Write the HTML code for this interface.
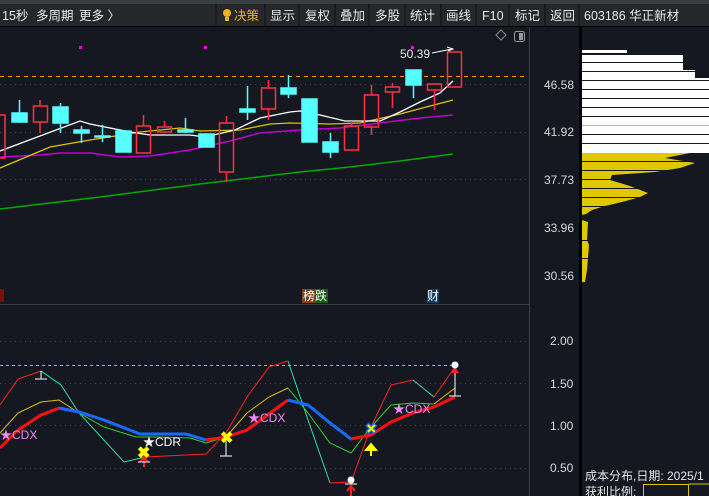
<!DOCTYPE html>
<html><head><meta charset="utf-8"><style>
html,body{margin:0;padding:0;background:#151821;width:709px;height:496px;overflow:hidden;font-family:"Liberation Sans","Noto Sans CJK SC",sans-serif}
svg{display:block}
</style></head><body>
<svg width="709" height="496" xmlns="http://www.w3.org/2000/svg" font-family="Liberation Sans, Noto Sans CJK SC, sans-serif">
<rect width="709" height="496" fill="#151821"/>
<!-- top bar -->
<rect x="0" y="0" width="709" height="4" fill="#3a3d44"/>
<rect x="0" y="4" width="709" height="22" fill="#26272b"/>
<rect x="0" y="26" width="709" height="1" fill="#000"/>
<g font-size="12.5" fill="#e8e8e8">
<text x="2" y="20">15秒</text><text x="36" y="20">多周期</text><text x="79" y="20">更多 〉</text>
</g>
<g stroke="#111" stroke-width="1">
<line x1="216" y1="4" x2="216" y2="26"/><line x1="265" y1="4" x2="265" y2="26"/><line x1="299" y1="4" x2="299" y2="26"/><line x1="335" y1="4" x2="335" y2="26"/><line x1="369" y1="4" x2="369" y2="26"/><line x1="405" y1="4" x2="405" y2="26"/><line x1="441" y1="4" x2="441" y2="26"/><line x1="476" y1="4" x2="476" y2="26"/><line x1="509" y1="4" x2="509" y2="26"/><line x1="545" y1="4" x2="545" y2="26"/><line x1="579" y1="4" x2="579" y2="26"/>
</g>
<circle cx="227" cy="13" r="4" fill="#f0b020"/><rect x="225" y="17" width="4" height="4" fill="#f0b020"/>
<g font-size="12.5" fill="#e8e8e8">
<text x="234" y="20" fill="#f0b020">决策</text><text x="270" y="20">显示</text><text x="305" y="20">复权</text><text x="340" y="20">叠加</text><text x="375" y="20">多股</text><text x="410" y="20">统计</text><text x="446" y="20">画线</text><text x="482" y="20">F10</text><text x="515" y="20">标记</text><text x="550" y="20">返回</text>
<text x="584" y="20">603186 华正新材</text>
</g>
<!-- separators -->
<line x1="529.5" y1="27" x2="529.5" y2="496" stroke="#3a3d44"/>
<rect x="579" y="27" width="3" height="469" fill="#000"/>
<line x1="0" y1="304.5" x2="529" y2="304.5" stroke="#3a3d44"/>
<!-- icons -->
<path d="M501 30 L506 35 L501 40 L496 35 Z" fill="none" stroke="#888"/>
<rect x="514.5" y="31.5" width="10" height="10" rx="2" fill="none" stroke="#999"/><rect x="519" y="33" width="4" height="7" fill="#999"/>
<!-- grid -->
<g stroke="#3c3f48" stroke-dasharray="1,4">
<line x1="0" y1="84.5" x2="529" y2="84.5"/><line x1="0" y1="132.5" x2="529" y2="132.5"/><line x1="0" y1="179.5" x2="529" y2="179.5"/>
<line x1="0" y1="341.5" x2="529" y2="341.5"/><line x1="0" y1="383.5" x2="529" y2="383.5"/><line x1="0" y1="425.5" x2="529" y2="425.5"/><line x1="0" y1="468.5" x2="529" y2="468.5"/>
</g>
<line x1="0" y1="76.5" x2="528" y2="76.5" stroke="#ff9a00" stroke-dasharray="4,4"/>
<!-- axis labels -->
<g font-size="12" fill="#d8d8d8">
<text x="544" y="89">46.58</text><text x="544" y="136">41.92</text><text x="544" y="184">37.73</text><text x="544" y="232">33.96</text><text x="544" y="280">30.56</text>
<text x="550" y="345">2.00</text><text x="550" y="388">1.50</text><text x="550" y="430">1.00</text><text x="550" y="472">0.50</text>
</g>
<!-- magenta dots -->
<rect x="79" y="46" width="3" height="3" fill="#ff00ff"/><rect x="204" y="46" width="3" height="3" fill="#ff00ff"/><rect x="411" y="46" width="3" height="3" fill="#ff00ff"/>
<text x="400" y="58" font-size="12" fill="#e8e8e8">50.39</text>
<path d="M432 53 L452 49 M447 47 L453 49 L448 51" stroke="#fff" fill="none"/>
<!-- MA lines -->
<polyline fill="none" stroke="#0a0" stroke-width="1.5" points="0,209 100,197 200,184 250,178 300,172 350,167 400,161 453,154"/>
<polyline fill="none" stroke="#c000d0" stroke-width="1.5" points="0,157 40,155 60,153 90,153 120,157 150,156 190,150 230,141 260,133 300,130 340,128 380,123 420,118 453,115"/>
<polyline fill="none" stroke="#e0c000" stroke-width="1.3" points="0,168 50,147 90,140 140,132 180,128 200,131 240,130 270,124 290,123 330,124 360,123 400,114 430,106 453,100"/>
<polyline fill="none" stroke="#fff" stroke-width="1.3" points="0,151 80,121 90,124 130,132 150,135 190,135 205,137 235,130 260,118 290,112 300,111 320,115 345,121 360,121 380,121 400,112 420,102 440,93 453,81"/>
<!-- candles -->
<g stroke-width="1.5">
<g stroke="#ff3040" fill="none">
<rect x="-2" y="115" width="7" height="43"/><line x1="40" y1="100" x2="40" y2="106"/><line x1="40" y1="122" x2="40" y2="133"/><rect x="33.5" y="106" width="14" height="16"/>
<line x1="143.5" y1="115" x2="143.5" y2="126"/><rect x="136.5" y="126" width="14" height="27"/>
<line x1="164.5" y1="121" x2="164.5" y2="127"/><rect x="157.5" y="127" width="14" height="5"/>
<line x1="226.5" y1="116" x2="226.5" y2="123"/><line x1="226.5" y1="172" x2="226.5" y2="182"/><rect x="219.5" y="123" width="14" height="49"/>
<line x1="268.5" y1="80" x2="268.5" y2="88"/><line x1="268.5" y1="109" x2="268.5" y2="120"/><rect x="261.5" y="88" width="14" height="21"/>
<rect x="344.5" y="126" width="14" height="24"/><line x1="351.5" y1="121" x2="351.5" y2="126"/>
<line x1="371.5" y1="85" x2="371.5" y2="95"/><line x1="371.5" y1="127" x2="371.5" y2="135"/><rect x="364.5" y="95" width="14" height="32"/>
<line x1="392.5" y1="83" x2="392.5" y2="87"/><line x1="392.5" y1="92" x2="392.5" y2="108"/><rect x="385.5" y="87" width="14" height="5"/>
<line x1="434.5" y1="90" x2="434.5" y2="110"/><rect x="427.5" y="84" width="14" height="6"/>
<rect x="447.5" y="52" width="14" height="35"/>
</g>
<g stroke="#55ffff" fill="#55ffff">
<line x1="19.5" y1="100" x2="19.5" y2="123"/><rect x="12" y="113" width="15" height="9"/>
<line x1="60.5" y1="103" x2="60.5" y2="133"/><rect x="53" y="107" width="15" height="16"/>
<line x1="81.5" y1="126" x2="81.5" y2="143"/><rect x="74" y="130" width="15" height="3"/>
<line x1="102.5" y1="125" x2="102.5" y2="142"/><rect x="95" y="136" width="15" height="1"/>
<rect x="116" y="131" width="15" height="21"/>
<line x1="185.5" y1="118" x2="185.5" y2="133"/><rect x="178" y="130" width="15" height="2"/>
<rect x="199" y="134" width="15" height="13"/>
<line x1="247.5" y1="86" x2="247.5" y2="120"/><rect x="240" y="109" width="15" height="3"/>
<line x1="288.5" y1="75" x2="288.5" y2="98"/><rect x="281" y="88" width="15" height="6"/>
<rect x="302" y="99" width="15" height="43"/>
<line x1="330.5" y1="133" x2="330.5" y2="158"/><rect x="323" y="142" width="15" height="10"/>
<line x1="413.5" y1="85" x2="413.5" y2="98"/><rect x="406" y="70" width="15" height="15"/>
</g>
</g>
<!-- tags -->
<rect x="0" y="289" width="4" height="13" fill="#7a1010"/>
<rect x="302" y="289" width="14" height="14" fill="#7a4010"/><rect x="316" y="289" width="12" height="14" fill="#106010"/>
<text x="303" y="300" font-size="12" fill="#fff">榜跌</text>
<rect x="427" y="289" width="12" height="14" fill="#103a60"/><text x="427" y="300" font-size="12" fill="#fff">财</text>
<!-- bottom indicator -->
<line x1="0" y1="365.5" x2="455" y2="365.5" stroke="#40e0e0" stroke-dasharray="3,3"/>
<polyline fill="none" stroke="#ff2020" points="0,405 18,379 41,371"/>
<polyline fill="none" stroke="#30e0a0" points="41,371 61,385 79,413 124,462 145,457"/>
<polyline fill="none" stroke="#ff2020" points="145,457 206,454 226,433 247,397 269,367 288,361"/>
<polyline fill="none" stroke="#30e0a0" points="288,361 308,420 330,483"/>
<polyline fill="none" stroke="#ff2020" points="330,483 351,482 371,427 391,385 413,380"/>
<polyline fill="none" stroke="#30e0a0" points="413,380 434,397"/>
<polyline fill="none" stroke="#ff2020" points="434,397 455,367"/>
<polyline fill="none" stroke="#30d030" points="79,413 104,427 136,437 158,437 190,438 206,443 226,437"/>
<polyline fill="none" stroke="#30d030" points="288,388 308,413 330,443 351,453 371,427 391,405 413,403 434,404"/>
<polyline fill="none" stroke="#e0c000" points="0,433 18,413 41,402 59,400 79,413"/><polyline fill="none" stroke="#e0c000" points="226,437 247,413 269,397 288,388"/><polyline fill="none" stroke="#e0c000" points="434,404 455,388"/>
<polyline fill="none" stroke="#ff1010" stroke-width="3" points="0,448 18,430 41,415 59,408"/>
<polyline fill="none" stroke="#1a6aff" stroke-width="3" points="59,408 79,412 104,420 140,434 186,434 206,440"/>
<polyline fill="none" stroke="#ff1010" stroke-width="3" points="206,440 226,437 247,430 288,400"/>
<polyline fill="none" stroke="#1a6aff" stroke-width="3" points="288,400 308,405 330,423 351,439"/>
<polyline fill="none" stroke="#ff1010" stroke-width="3" points="351,439 371,435 391,422 413,413 434,407 455,397"/>
<path d="M35 379 H47 M41 379 V371" stroke="#fff" fill="none"/>
<path d="M220 456 H232 M226 456 V440" stroke="#fff" fill="none"/>
<line x1="455" y1="366" x2="455" y2="396" stroke="#fff"/><line x1="449" y1="396" x2="461" y2="396" stroke="#fff"/>
<path d="M451 373 L455 367 L459 373 Z" fill="#ff2020"/>
<circle cx="455" cy="365" r="3.5" fill="#fff"/>
<circle cx="351" cy="480" r="3.5" fill="#fff"/><path d="M345 484 H357" stroke="#fff"/>
<path d="M351 496 V488 M347 491 L351 486 L355 491" stroke="#ff2020" stroke-width="2" fill="none"/>
<path d="M144 467 V458 M140 462 L144 457 L148 462" stroke="#ff2020" stroke-width="2" fill="none"/><path d="M138 462 H150" stroke="#fff"/>
<path d="M371 456 V448 M366 450 L371 444 L376 450 Z" stroke="#ffff00" stroke-width="2" fill="#ffff00"/>
<g font-size="16" font-weight="bold" fill="#ffff00"><text x="137" y="458">✖</text><text x="220" y="443">✖</text></g>
<text x="365" y="434" font-size="15" font-weight="bold" fill="#ffff00" stroke="#1a6aff" stroke-width="0.8">✖</text>
<g font-size="12">
<text x="0" y="439" fill="#ee88ee">★CDX</text>
<text x="143" y="446" fill="#fff">★CDR</text>
<text x="248" y="422" fill="#ee88ee">★CDX</text>
<text x="393" y="413" fill="#ee88ee">★CDX</text>
</g>
<!-- distribution -->
<g fill="#fff">
<rect x="582" y="50" width="45" height="3"/>
<rect x="582" y="55" width="101" height="15"/>
<rect x="582" y="70" width="113" height="8"/>
<rect x="582" y="78" width="127" height="75"/>
</g>
<g stroke="#151821" stroke-width="1">
<line x1="582" y1="62.5" x2="709" y2="62.5"/><line x1="582" y1="71.5" x2="709" y2="71.5"/><line x1="582" y1="80.5" x2="709" y2="80.5"/><line x1="582" y1="89.5" x2="709" y2="89.5"/><line x1="582" y1="98.5" x2="709" y2="98.5"/><line x1="582" y1="107.5" x2="709" y2="107.5"/><line x1="582" y1="116.5" x2="709" y2="116.5"/><line x1="582" y1="125.5" x2="709" y2="125.5"/><line x1="582" y1="134.5" x2="709" y2="134.5"/><line x1="582" y1="143.5" x2="709" y2="143.5"/>
</g>
<line x1="582" y1="125.5" x2="709" y2="125.5" stroke="#40e0ff"/>
<polygon fill="#e0c800" points="582,153 690,153 665,158 695,163 680,168 655,172 612,175 610,180 630,186 648,193 640,197 622,202 605,206 592,210 586,214 582,215"/>
<polygon fill="#e0c800" points="582,220 588,222 587,240 589,245 587,270 585,282 582,282"/>
<g stroke="#151821"><line x1="582" y1="161.5" x2="700" y2="161.5"/><line x1="582" y1="170.5" x2="700" y2="170.5"/><line x1="582" y1="179.5" x2="700" y2="179.5"/><line x1="582" y1="188.5" x2="700" y2="188.5"/><line x1="582" y1="197.5" x2="700" y2="197.5"/><line x1="582" y1="206.5" x2="700" y2="206.5"/><line x1="582" y1="240.5" x2="600" y2="240.5"/><line x1="582" y1="258.5" x2="600" y2="258.5"/></g>
<text x="585" y="480" font-size="12" fill="#e8e8e8">成本分布,日期: 2025/1</text>
<text x="585" y="496" font-size="12" fill="#e8e8e8">获利比例:</text>
<rect x="643.5" y="484.5" width="45" height="14" fill="none" stroke="#e0c000"/><line x1="688.5" y1="484" x2="709" y2="484" stroke="#e0c000"/>
</svg>
</body></html>
